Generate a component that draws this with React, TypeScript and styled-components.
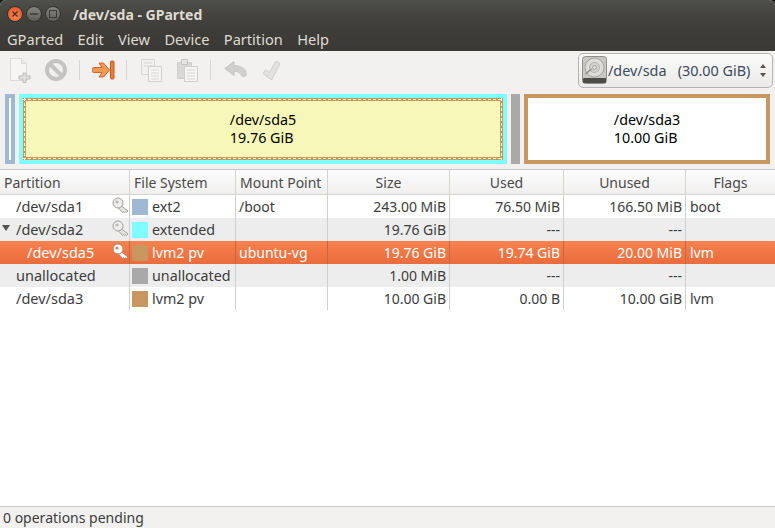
import React from "react";
import styled, { createGlobalStyle } from "styled-components";

const GlobalStyle = createGlobalStyle`
  html, body {
    margin: 0;
    padding: 0;
    background: #1b1a18;
  }
  * {
    box-sizing: border-box;
  }
`;

const Window = styled.div`
  width: 775px;
  height: 528px;
  display: flex;
  flex-direction: column;
  overflow: hidden;
  border-radius: 6px 6px 0 0;
  background: #f2f1f0;
  color: #3c3c3c;
  font-family: "Noto Sans", sans-serif;
  font-size: 14px;
`;

const TitleBar = styled.div`
  height: 28px;
  display: flex;
  align-items: center;
  padding-left: 7px;
  background: linear-gradient(#50504a, #45443f 50%, #3e3d39);
  flex: none;
`;

const WinButton = styled.div<{ $close?: boolean }>`
  width: 16px;
  height: 16px;
  margin-right: 3px;
  border-radius: 50%;
  display: flex;
  align-items: center;
  justify-content: center;
  border: 1px solid #33322e;
  background: ${(p) =>
    p.$close
      ? "radial-gradient(circle at 50% 70%, #f7834f, #e2512a)"
      : "linear-gradient(#85847d, #5f5e58)"};
`;

const Title = styled.div`
  margin-left: 9px;
  color: #dfdbd2;
  font-weight: 700;
  font-size: 14px;
`;

const MenuBar = styled.div`
  height: 23px;
  display: flex;
  align-items: center;
  gap: 14.4px;
  padding: 0 0 2px 7px;
  background: linear-gradient(#3e3d39, #3a3935);
  color: #dfdbd2;
  font-size: 14.6px;
  flex: none;
`;

const Toolbar = styled.div`
  height: 38px;
  display: flex;
  align-items: center;
  padding-left: 2px;
  background: #f2f1f0;
  flex: none;
`;

const ToolButton = styled.div`
  width: 36px;
  height: 26px;
  display: flex;
  align-items: center;
  justify-content: center;
`;

const ToolSep = styled.div<{ $after?: number }>`
  width: 1px;
  height: 20px;
  margin: 0 ${(p) => p.$after ?? 6}px 0 5px;
  background: #d8d7d5;
`;

const Combo = styled.div`
  margin-left: auto;
  margin-right: 2px;
  width: 195px;
  height: 35px;
  display: flex;
  align-items: center;
  padding-left: 3px;
  gap: 1px;
  border: 1px solid #b4b3b0;
  border-radius: 5px;
  background: linear-gradient(#fbfbfa, #ebeae8);
`;

const ComboText = styled.span`
  white-space: pre;
  color: #3b4a5c;
  font-size: 14.4px;
`;

const ComboArrows = styled.svg`
  margin-left: auto;
  margin-right: 6px;
`;

const Graph = styled.div`
  height: 70px;
  margin: 5px;
  display: flex;
  gap: 4px;
  flex: none;
`;

const Sliver = styled.div`
  width: 10px;
  border: 4px solid #9fb8d4;
  background: #ffffff;
`;

const Extended = styled.div`
  width: 488px;
  border: 4px solid #7ffcff;
  display: flex;
`;

const cream = "#fbf9c4";
const dashesX = `repeating-linear-gradient(90deg, ${cream} 0 3px, transparent 3px 5px)`;
const dashesY = `repeating-linear-gradient(180deg, ${cream} 0 3px, transparent 3px 5px)`;

const SelectionFrame = styled.div`
  flex: 1;
  display: flex;
  padding: 3px;
  background:
    ${dashesX} 0 1px / 100% 1px no-repeat,
    ${dashesX} 0 calc(100% - 1px) / 100% 1px no-repeat,
    ${dashesY} 1px 0 / 1px 100% no-repeat,
    ${dashesY} calc(100% - 1px) 0 / 1px 100% no-repeat,
    #c8965f;
`;

const SelectedFill = styled.div`
  flex: 1;
  display: flex;
  align-items: center;
  justify-content: center;
  background: #f8f7ba;
`;

const Unallocated = styled.div`
  width: 9px;
  background: #a9a9a9;
`;

const PlainPartition = styled.div`
  width: 246px;
  border: 4px solid #c8965f;
  background: #ffffff;
  display: flex;
  align-items: center;
  justify-content: center;
`;

const GraphLabel = styled.div`
  color: #000000;
  font-size: 14.3px;
  line-height: 18px;
`;

const Table = styled.div`
  flex: 1;
  display: flex;
  flex-direction: column;
  background: #ffffff;
  border-top: 1px solid #c8c7c5;
  border-bottom: 1px solid #c8c7c5;
`;

const columns = "130px 106px 92px 122px 114px 122px 89px";

const HeadRow = styled.div`
  height: 25px;
  display: grid;
  grid-template-columns: ${columns};
  background: linear-gradient(#fdfdfd, #f0efee);
  border-bottom: 1px solid #d5d4d2;
  flex: none;
`;

const HeadCell = styled.div<{ $center?: boolean }>`
  display: flex;
  align-items: center;
  justify-content: ${(p) => (p.$center ? "center" : "flex-start")};
  padding-left: ${(p) => (p.$center ? "0" : "4px")};
  border-right: 1px solid #d5d4d2;
  color: #4a4a4a;
  &:last-child {
    border-right: none;
  }
`;

const Row = styled.div<{ $alt?: boolean; $selected?: boolean }>`
  height: 23px;
  display: grid;
  grid-template-columns: ${columns};
  flex: none;
  color: ${(p) => (p.$selected ? "#ffffff" : "#3c3c3c")};
  background: ${(p) =>
    p.$selected
      ? "linear-gradient(#f6824f, #ea6c3c)"
      : p.$alt
        ? "#ededed"
        : "#ffffff"};
`;

const Cell = styled.div<{ $right?: boolean; $selected?: boolean }>`
  display: flex;
  align-items: center;
  justify-content: ${(p) => (p.$right ? "flex-end" : "flex-start")};
  padding: 0 3px;
  white-space: nowrap;
  overflow: hidden;
  border-right: 1px solid ${(p) => (p.$selected ? "#c9653f" : "#d0cfcd")};
  &:last-child {
    border-right: none;
    padding-left: 4px;
  }
`;

const PartitionCell = styled(Cell)<{ $indent: number }>`
  padding: 0 0 2px ${(p) => p.$indent}px;
  position: relative;
  font-size: 14.5px;
`;

const FsCell = styled(Cell)`
  padding-left: 2px;
  font-size: 14.3px;
`;

const Expander = styled.span`
  position: absolute;
  left: 2px;
  top: 7px;
  width: 0;
  height: 0;
  border-left: 4px solid transparent;
  border-right: 4px solid transparent;
  border-top: 6px solid #55544f;
`;

const KeySlot = styled.span`
  margin-left: auto;
  display: flex;
  width: 17px;
`;

const Swatch = styled.span<{ $color: string }>`
  width: 16px;
  height: 16px;
  margin-right: 4px;
  flex: none;
  background: ${(p) => p.$color};
`;

const StatusBar = styled.div`
  height: 21px;
  display: flex;
  align-items: center;
  padding-left: 3px;
  background: #f2f1f0;
  flex: none;
`;

const KeyIcon = ({ light }: { light?: boolean }) => {
  const edge = light ? "#b9805f" : "#a09f9c";
  return (
    <svg width="17" height="17" viewBox="0 0 17 17">
      <path
        d="M9 8.500l7 5.500-1.600 1.600-1-.8-.9.9-1-.9-.9.6L6.500 11"
        fill={light ? "#ffffff" : "#e4e3e0"}
        stroke={edge}
      />
      <circle cx="6" cy="6" r="5" fill={light ? "#ffffff" : "#eeedeb"} stroke={edge} />
      <circle cx="5" cy="5" r="1.600" fill={light ? "#c98a66" : "#bcbbb8"} />
    </svg>
  );
};

const NewIcon = () => (
  <svg width="22" height="25" viewBox="0 0 22 25">
    <path d="M1.500 .5h11l5 5v17h-16z" fill="#f6f5f4" stroke="#dcdbd9" />
    <path d="M12.500 .5v5h5" fill="#e8e7e5" stroke="#dcdbd9" />
    <path d="M14 15h3v3h4v3h-4v3.500h-3V21h-4v-3h4z" fill="#e2e1df" stroke="#bdbcba" />
  </svg>
);

const StopIcon = () => (
  <svg width="22" height="22" viewBox="0 0 22 22">
    <circle cx="11" cy="11" r="9" fill="#f0efee" stroke="#c4c3c1" strokeWidth="4" />
    <path d="M4.500 4.500l13 13" stroke="#c4c3c1" strokeWidth="4" />
  </svg>
);

const ApplyIcon = () => (
  <svg width="23" height="20" viewBox="0 0 23 20">
    <rect x="18.500" y="1" width="3.500" height="18" rx="1" fill="#e8803c" stroke="#c85a20" />
    <path
      d="M1.500 7.500h8.500l-3-4.500h4.500l6 7-6 7H7l3-4.500H1.500a1.500 2.500 0 0 1 0-5z"
      fill="#f09a54"
      stroke="#d0642a"
    />
  </svg>
);

const CopyIcon = () => (
  <svg width="21" height="23" viewBox="0 0 21 23">
    <path d="M.5.500h13v15H.5z" fill="#f1f0ef" stroke="#d6d5d3" />
    <path d="M7.500 7.500h13v15h-13z" fill="#f6f5f4" stroke="#d0cfcd" />
    <path d="M3 4h8M3 7h8M10 11h8M10 14h8M10 17h8M10 20h8" stroke="#d8d7d5" />
  </svg>
);

const PasteIcon = () => (
  <svg width="21" height="24" viewBox="0 0 21 24">
    <path d="M.5 4.500h14v16H.5z" fill="#d9d8d6" stroke="#cfcecc" />
    <path d="M4.500 1.500h6v5h-6z" fill="#e6e5e3" stroke="#c4c3c1" />
    <path d="M7.500 8.500h13v15h-13z" fill="#f6f5f4" stroke="#d0cfcd" />
    <path d="M10 12h8M10 15h8M10 18h8M10 21h8" stroke="#d8d7d5" />
  </svg>
);

const UndoIcon = () => (
  <svg width="23" height="19" viewBox="0 0 23 19">
    <path
      d="M10 .5L.8 7.500 10 14.500v-4c3.500-.3 6 .8 7.500 4.200.7 1.500 4.300 1.300 4.700-1C22.800 8 16.500 4.500 10 4.500z"
      fill="#d0cfcd"
      stroke="#c6c5c3"
    />
  </svg>
);

const CheckIcon = () => (
  <svg width="19" height="21" viewBox="0 0 19 21">
    <path d="M14 1l4 2.500L9.500 20 1 13.500l2.500-3.500 4 2.500z" fill="#e2e1df" stroke="#cfcecc" />
  </svg>
);

const DiskIcon = () => (
  <svg width="25" height="28" viewBox="0 0 25 28">
    <rect x=".5" y=".5" width="24" height="27" rx="3" fill="#c9c8c5" stroke="#8f8e8b" />
    <circle cx="12.500" cy="11.500" r="9.500" fill="#dddcd9" stroke="#a4a3a0" />
    <circle cx="12.500" cy="11.500" r="5" fill="#d2d1ce" stroke="#b4b3b0" />
    <circle cx="12.500" cy="11.500" r="1.800" fill="#efeeec" stroke="#9a9996" />
    <path d="M3.500 18l6-5" stroke="#8f8e8b" strokeWidth="1.500" />
    <rect x="1" y="22" width="23" height="5" rx="1" fill="#4d4c47" />
  </svg>
);

const rows = [
  { name: "/dev/sda1", indent: 16, key: true, color: "#9fb8d4", fs: "ext2", mount: "/boot", size: "243.00 MiB", used: "76.50 MiB", unused: "166.50 MiB", flags: "boot" },
  { name: "/dev/sda2", indent: 16, key: true, expander: true, alt: true, color: "#7ffcff", fs: "extended", mount: "", size: "19.76 GiB", used: "---", unused: "---", flags: "" },
  { name: "/dev/sda5", indent: 27, key: true, selected: true, color: "#c8965f", fs: "lvm2 pv", mount: "ubuntu-vg", size: "19.76 GiB", used: "19.74 GiB", unused: "20.00 MiB", flags: "lvm" },
  { name: "unallocated", indent: 16, alt: true, color: "#a9a9a9", fs: "unallocated", mount: "", size: "1.00 MiB", used: "---", unused: "---", flags: "" },
  { name: "/dev/sda3", indent: 16, color: "#c8965f", fs: "lvm2 pv", mount: "", size: "10.00 GiB", used: "0.00 B", unused: "10.00 GiB", flags: "lvm" },
];

export default function App() {
  return (
    <Window>
      <GlobalStyle />
      <TitleBar>
        <WinButton $close>
          <svg width="8" height="8" viewBox="0 0 8 8">
            <path d="M1.500 1.500l5 5M6.500 1.500l-5 5" stroke="#54291a" strokeWidth="1.300" />
          </svg>
        </WinButton>
        <WinButton>
          <svg width="8" height="8" viewBox="0 0 8 8">
            <path d="M0 4h8" stroke="#3c3b37" strokeWidth="1.500" />
          </svg>
        </WinButton>
        <WinButton>
          <svg width="8" height="8" viewBox="0 0 8 8">
            <rect x=".5" y=".5" width="7" height="7" fill="none" stroke="#3c3b37" />
          </svg>
        </WinButton>
        <Title>/dev/sda - GParted</Title>
      </TitleBar>
      <MenuBar>
        <span>GParted</span>
        <span>Edit</span>
        <span>View</span>
        <span>Device</span>
        <span>Partition</span>
        <span>Help</span>
      </MenuBar>
      <Toolbar>
        <ToolButton><NewIcon /></ToolButton>
        <ToolButton><StopIcon /></ToolButton>
        <ToolSep $after={5} />
        <ToolButton><ApplyIcon /></ToolButton>
        <ToolSep />
        <ToolButton><CopyIcon /></ToolButton>
        <ToolButton><PasteIcon /></ToolButton>
        <ToolSep />
        <ToolButton><UndoIcon /></ToolButton>
        <ToolButton><CheckIcon /></ToolButton>
        <Combo>
          <DiskIcon />
          <ComboText>/dev/sda   (30.00 GiB)</ComboText>
          <ComboArrows width="6" height="13" viewBox="0 0 6 13">
            <path d="M3 0l3 4H0zM3 13l3-4H0z" fill="#55544f" />
          </ComboArrows>
        </Combo>
      </Toolbar>
      <Graph>
        <Sliver />
        <Extended>
          <SelectionFrame>
            <SelectedFill>
              <GraphLabel>
                /dev/sda5
                <br />
                19.76 GiB
              </GraphLabel>
            </SelectedFill>
          </SelectionFrame>
        </Extended>
        <Unallocated />
        <PlainPartition>
          <GraphLabel>
            /dev/sda3
            <br />
            10.00 GiB
          </GraphLabel>
        </PlainPartition>
      </Graph>
      <Table>
        <HeadRow>
          <HeadCell>Partition</HeadCell>
          <HeadCell>File System</HeadCell>
          <HeadCell>Mount Point</HeadCell>
          <HeadCell $center>Size</HeadCell>
          <HeadCell $center>Used</HeadCell>
          <HeadCell $center>Unused</HeadCell>
          <HeadCell $center>Flags</HeadCell>
        </HeadRow>
        {rows.map((r) => (
          <Row key={r.name} $alt={r.alt} $selected={r.selected}>
            <PartitionCell $indent={r.indent} $selected={r.selected}>
              {r.expander && <Expander />}
              {r.name}
              {r.key && (
                <KeySlot>
                  <KeyIcon light={r.selected} />
                </KeySlot>
              )}
            </PartitionCell>
            <FsCell $selected={r.selected}>
              <Swatch $color={r.color} />
              {r.fs}
            </FsCell>
            <Cell $selected={r.selected}>{r.mount}</Cell>
            <Cell $right $selected={r.selected}>{r.size}</Cell>
            <Cell $right $selected={r.selected}>{r.used}</Cell>
            <Cell $right $selected={r.selected}>{r.unused}</Cell>
            <Cell $selected={r.selected}>{r.flags}</Cell>
          </Row>
        ))}
      </Table>
      <StatusBar>0 operations pending</StatusBar>
    </Window>
  );
}
